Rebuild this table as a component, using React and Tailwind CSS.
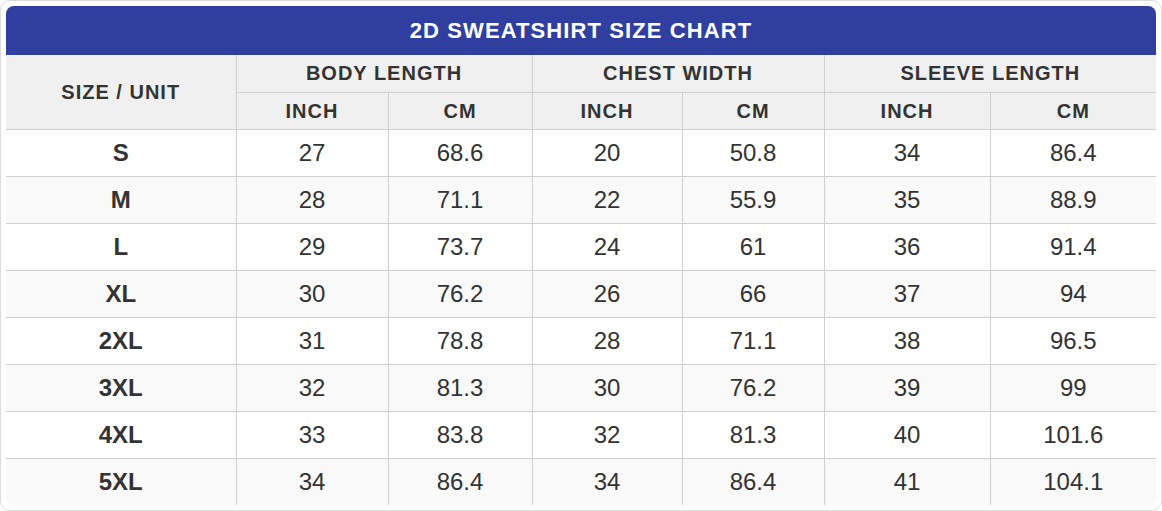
import React from "react";

const rows = [
  ["S", "27", "68.6", "20", "50.8", "34", "86.4"],
  ["M", "28", "71.1", "22", "55.9", "35", "88.9"],
  ["L", "29", "73.7", "24", "61", "36", "91.4"],
  ["XL", "30", "76.2", "26", "66", "37", "94"],
  ["2XL", "31", "78.8", "28", "71.1", "38", "96.5"],
  ["3XL", "32", "81.3", "30", "76.2", "39", "99"],
  ["4XL", "33", "83.8", "32", "81.3", "40", "101.6"],
  ["5XL", "34", "86.4", "34", "86.4", "41", "104.1"],
];

export default function App() {
  return (
    <div
      className="w-[1162px] h-[511px] bg-white border border-[#dcdcdc] rounded-[10px] p-[5px] text-[#333]"
      style={{ fontFamily: '"Liberation Sans", Arial, sans-serif' }}
    >
      <div className="rounded-[8px] overflow-hidden">
        <div className="h-[49px] bg-[#303f9f] flex items-center justify-center text-white font-bold text-[22px] tracking-[0.05em]">
          2D SWEATSHIRT SIZE CHART
        </div>
        <table className="w-[1150px] table-fixed border-collapse">
          <colgroup>
            <col className="w-[230px]" />
            <col className="w-[152px]" />
            <col className="w-[144px]" />
            <col className="w-[150px]" />
            <col className="w-[142px]" />
            <col className="w-[166px]" />
            <col className="w-[166px]" />
          </colgroup>
          <thead className="bg-[#f0f0f0] text-[20px] font-bold tracking-[0.05em]">
            <tr className="h-[37px]">
              <th rowSpan={2} className="border-r border-b border-[#cfcfcf] font-bold p-0">
                SIZE / UNIT
              </th>
              <th colSpan={2} className="border-r border-b border-[#cfcfcf] font-bold p-0">
                BODY LENGTH
              </th>
              <th colSpan={2} className="border-r border-b border-[#cfcfcf] font-bold p-0">
                CHEST WIDTH
              </th>
              <th colSpan={2} className="border-b border-[#cfcfcf] font-bold p-0">
                SLEEVE LENGTH
              </th>
            </tr>
            <tr className="h-[37px]">
              {["INCH", "CM", "INCH", "CM", "INCH", "CM"].map((t, i) => (
                <th
                  key={i}
                  className={`border-b border-[#cfcfcf] font-bold p-0 ${i < 5 ? "border-r" : ""}`}
                >
                  {t}
                </th>
              ))}
            </tr>
          </thead>
          <tbody className="text-[24px]">
            {rows.map((r, ri) => (
              <tr
                key={ri}
                className={`h-[47px] ${ri % 2 === 1 ? "bg-[#f9f9f9]" : "bg-white"}`}
              >
                {r.map((c, ci) => (
                  <td
                    key={ci}
                    className={`text-center p-0 border-[#cfcfcf] ${ri < 7 ? "border-b" : ""} ${ci < 6 ? "border-r" : ""} ${ci === 0 ? "font-bold" : ""}`}
                  >
                    {c}
                  </td>
                ))}
              </tr>
            ))}
          </tbody>
        </table>
      </div>
    </div>
  );
}
